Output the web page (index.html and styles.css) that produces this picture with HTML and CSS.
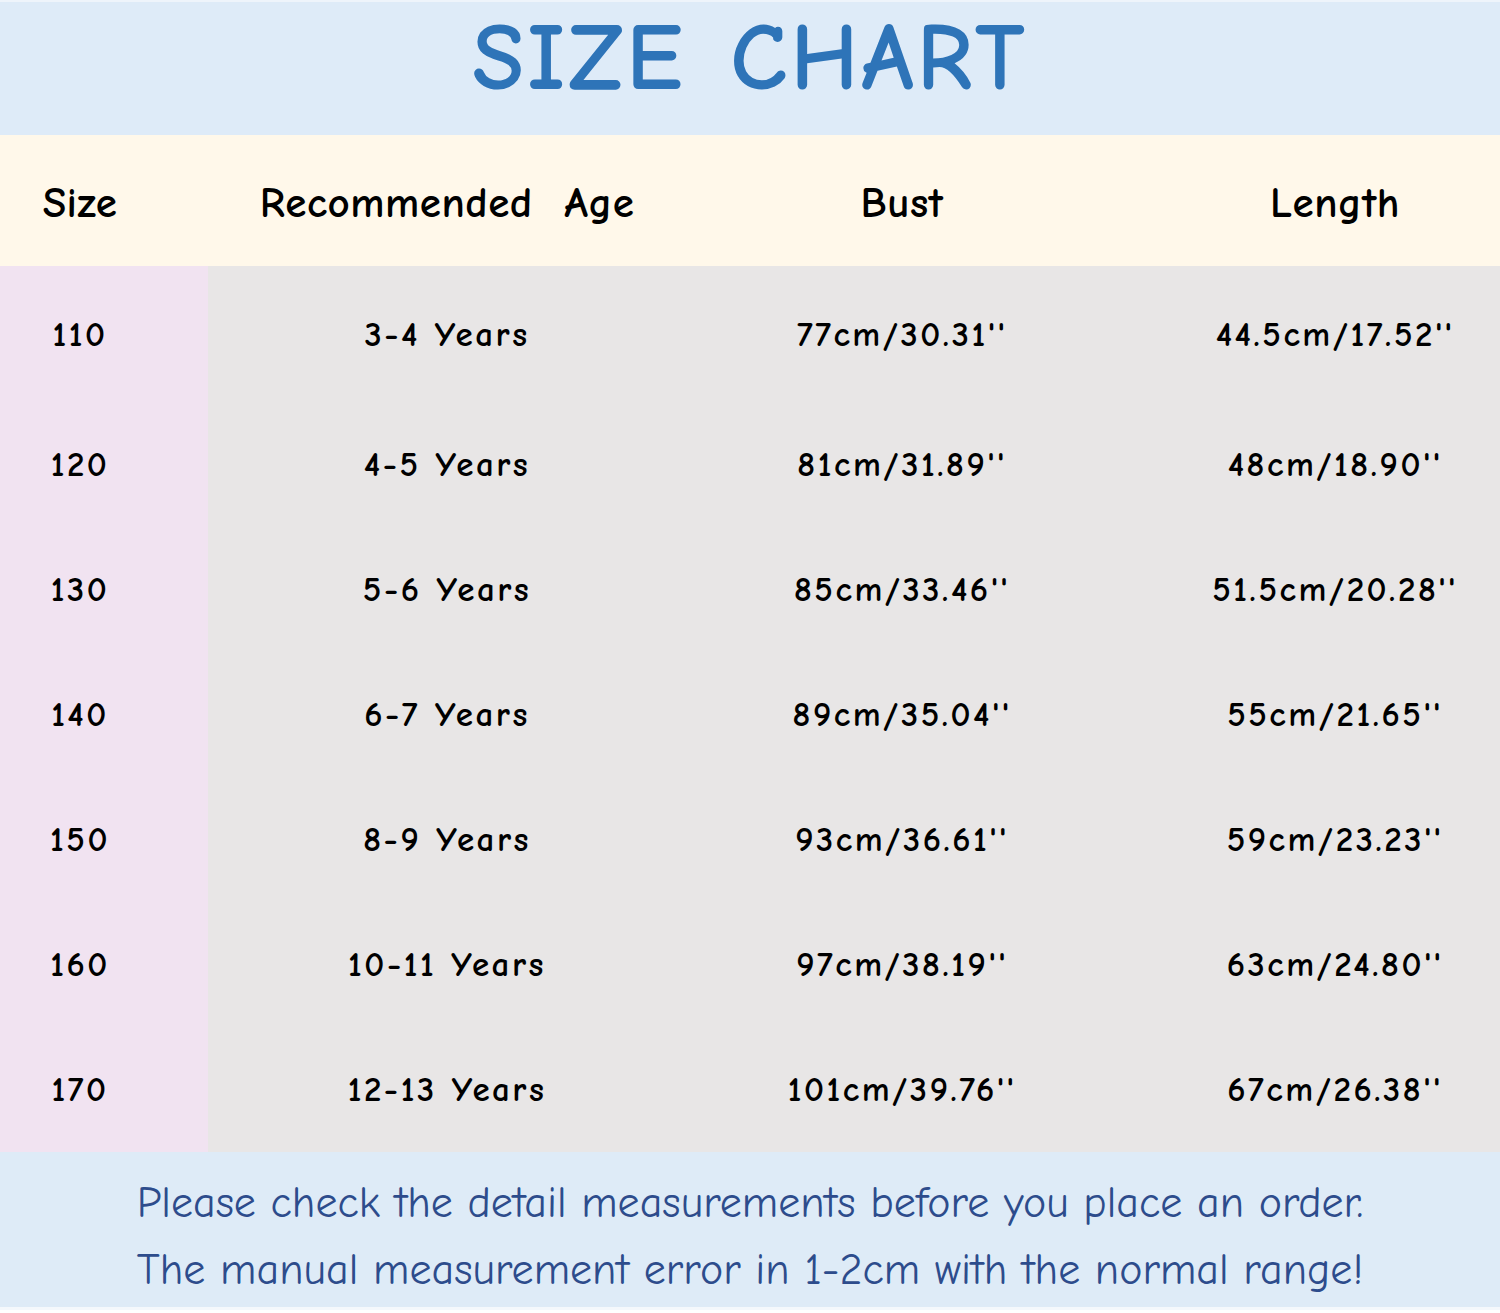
FILE: index.html
```html
<!DOCTYPE html>
<html>
<head>
<meta charset="utf-8">
<link rel="stylesheet" href="styles.css">
</head>
<body>
<div class="chart">
  <div class="title-band"><h1 class="title">SIZE CHART</h1></div>
  <div class="row head">
    <div class="cell c1">Size</div>
    <div class="cell c2">Recommended&nbsp; Age</div>
    <div class="cell c3">Bust</div>
    <div class="cell c4"></div>
    <div class="cell c5">Length</div>
  </div>
  <div class="body">
    <div class="row data first"><div class="cell c1">110</div><div class="cell c2">3-4 Years</div><div class="cell c3">77cm/30.31''</div><div class="cell c4"></div><div class="cell c5">44.5cm/17.52''</div></div>
    <div class="row data"><div class="cell c1">120</div><div class="cell c2">4-5 Years</div><div class="cell c3">81cm/31.89''</div><div class="cell c4"></div><div class="cell c5">48cm/18.90''</div></div>
    <div class="row data"><div class="cell c1">130</div><div class="cell c2">5-6 Years</div><div class="cell c3">85cm/33.46''</div><div class="cell c4"></div><div class="cell c5">51.5cm/20.28''</div></div>
    <div class="row data"><div class="cell c1">140</div><div class="cell c2">6-7 Years</div><div class="cell c3">89cm/35.04''</div><div class="cell c4"></div><div class="cell c5">55cm/21.65''</div></div>
    <div class="row data"><div class="cell c1">150</div><div class="cell c2">8-9 Years</div><div class="cell c3">93cm/36.61''</div><div class="cell c4"></div><div class="cell c5">59cm/23.23''</div></div>
    <div class="row data"><div class="cell c1">160</div><div class="cell c2">10-11 Years</div><div class="cell c3">97cm/38.19''</div><div class="cell c4"></div><div class="cell c5">63cm/24.80''</div></div>
    <div class="row data"><div class="cell c1">170</div><div class="cell c2">12-13 Years</div><div class="cell c3">101cm/39.76''</div><div class="cell c4"></div><div class="cell c5">67cm/26.38''</div></div>
  </div>
  <div class="footer">
    <p class="note">Please check the detail measurements before you place an order.</p>
    <p class="note">The manual measurement error in 1-2cm with the normal range!</p>
  </div>
</div>
</body>
</html>
```
FILE: styles.css
```css
html, body {
  margin: 0;
  padding: 0;
  background: #ffffff;
}
.chart {
  width: 1500px;
  height: 1313px;
  display: flex;
  flex-direction: column;
  font-family: "Comic Sans MS", "Comic Neue", "DejaVu Sans", sans-serif;
  color: #000;
}
.title-band {
  height: 133px;
  border-top: 2px solid #eef4fb;
  background: #deebf8;
  display: flex;
  justify-content: center;
  align-items: center;
}
.title {
  margin: 0 0 20px 0;
  font-size: 95px;
  font-weight: bold;
  color: #2e74b8;
  letter-spacing: 3px;
  word-spacing: 8px;
  line-height: 1;
}
.row {
  display: grid;
  grid-template-columns: 160px 574px 336px 100px 330px;
  align-items: center;
}
.cell {
  text-align: center;
  white-space: nowrap;
}
.head {
  height: 131px;
  background: #fff8ea;
  font-size: 43px;
  font-weight: bold;
  letter-spacing: 0.5px;
}
.head .cell {
  margin-top: 4px;
}
.body {
  background: linear-gradient(to right, #f1e3f1 208px, #e8e6e6 208px);
}
.data {
  height: 125px;
  font-size: 35px;
  font-weight: bold;
  letter-spacing: 2.5px;
}
.data.first {
  height: 136px;
}
.footer {
  height: 158px;
  background: #deebf7;
  border-bottom: 3px solid #f4f8fc;
  display: flex;
  flex-direction: column;
  align-items: center;
  justify-content: center;
  gap: 18px;
  padding-top: 14px;
  box-sizing: border-box;
}
.note {
  margin: 0;
  font-family: "Comic Neue", "Noto Sans", sans-serif;
  font-size: 44px;
  color: #2d4c8c;
  line-height: 1.1;
}
```
